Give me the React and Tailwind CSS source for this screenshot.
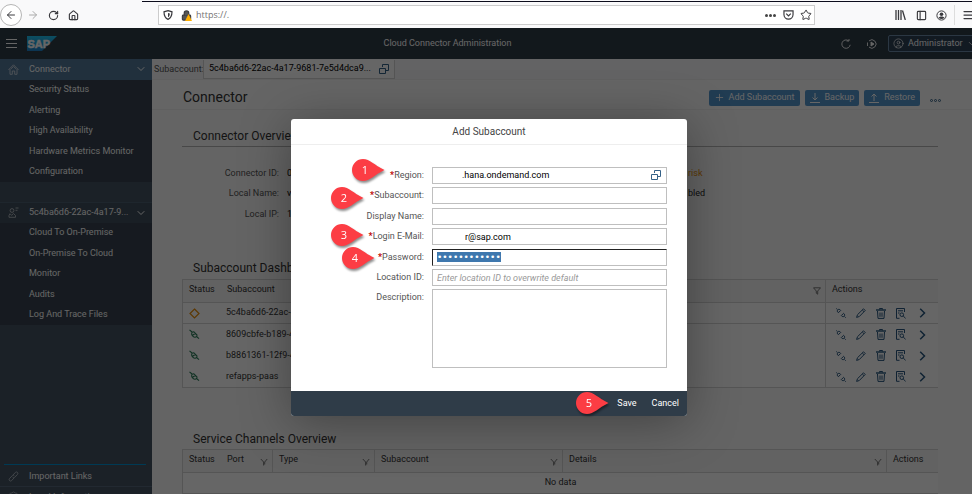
import { useEffect, useRef } from "react";
import {
  ArrowLeft, ArrowRight, RotateCw, House, Shield, Lock, Star, Menu, ChevronDown,
  CircleUser, Plus, PanelLeft,
} from "lucide-react";

function SapLogo() {
  return (
    <svg width="30" height="15" viewBox="0 0 30 15" role="img" aria-label="SAP">
      <defs>
        <linearGradient id="sap" x1="0" y1="0" x2="0" y2="1">
          <stop offset="0" stopColor="#1fc4f5" />
          <stop offset="1" stopColor="#1f82cc" />
        </linearGradient>
      </defs>
      <path d="M0 0H30L15 15H0Z" fill="url(#sap)" />
      <text x="0.500" y="11.500" fontFamily="Liberation Sans, sans-serif" fontWeight="700" fontSize="11" fill="#fff" stroke="#fff" strokeWidth="0.500">SAP</text>
    </svg>
  );
}

function ValueHelpIcon() {
  return (
    <svg width="10" height="10" viewBox="0 0 10 10" fill="none" stroke="#346187">
      <path d="M3.500 3V.5H9.500V6.500H6.500" />
      <path d="M.5 4.500H6.500V9.500H.5Z" />
    </svg>
  );
}

function FilterIcon({ thin }) {
  return (
    <svg width="8" height="8" viewBox="0 0 8 8" fill="none" stroke="#6a6a6a" strokeWidth="0.900">
      <path d={thin ? "M.8 1L3.600 4V7.500M7.200 1L4.700 4V6.500" : "M.5 .8H7.500L4.700 4V7.200L3.300 6.200V4Z"} />
    </svg>
  );
}

function HomeIcon() {
  return (
    <svg width="11" height="11" viewBox="0 0 11 11" fill="none" stroke="#c9d3dc" strokeWidth="0.900">
      <path d="M.5 5.800L5.500 .8L10.500 5.800M2 5V10.300H4.300V7H6.700V10.300H9V5M3 4.800L5.500 2.500L8 4.800" />
    </svg>
  );
}

function PersonIcon() {
  return (
    <svg width="11" height="11" viewBox="0 0 11 11" fill="none" stroke="#b5bcc2" strokeWidth="0.900">
      <circle cx="4" cy="3.500" r="1.900" />
      <path d="M1 10.300H7.500V8.500L5.500 6.500L3.500 8.300L2 6.700L1 8.500ZM7.500 1H10.500M7.500 3.300H9.500" />
    </svg>
  );
}

function ChainIcon() {
  return (
    <svg width="11" height="11" viewBox="0 0 11 11" fill="none" stroke="#a5afb8" strokeWidth="1">
      <path d="M4.800 4.200L7.500 1.300C8.700 .2 10.700 1.900 9.600 3.300L6.800 6.300C6.200 6.900 5.200 6.800 4.600 6.200" />
      <path d="M6.200 6.800L3.500 9.700C2.300 10.800 .3 9.100 1.400 7.700L4.200 4.700C4.800 4.100 5.800 4.200 6.400 4.800" />
    </svg>
  );
}

function ConnectedIcon() {
  return (
    <svg width="11" height="11" viewBox="0 0 11 11" fill="none" stroke="#2b7d5a" strokeWidth="1.100">
      <path d="M.5 .8L3 3M7.500 7.500L10 9.700M4 7.300C1.500 5.300 2.700 2.600 4.800 2.700L8 6C8.200 8 5.800 9 4 7.300ZM3.400 6.300L6.800 4.200" />
    </svg>
  );
}

function DisconnectIcon() {
  return (
    <svg width="10" height="10" viewBox="0 0 10 10" fill="none" stroke="currentColor" strokeWidth="1">
      <path d="M.3 .5L1.500 1.700M8.500 8.500L9.700 9.700M1.500 3.800C.8 2.200 2.300 .8 3.800 1.500L4.700 2.400L2.400 4.700ZM8.500 6.200C9.200 7.800 7.700 9.200 6.200 8.500L5.300 7.600L7.600 5.300Z" />
    </svg>
  );
}

function EditIcon() {
  return (
    <svg width="10" height="10" viewBox="0 0 10 10" fill="none" stroke="currentColor" strokeWidth="1">
      <path d="M.6 9.400L1.500 6.700L7.500 .8L9.200 2.500L3.300 8.500ZM6.300 2L8 3.700" />
    </svg>
  );
}

function DeleteIcon() {
  return (
    <svg width="10" height="11" viewBox="0 0 10 11" fill="none" stroke="currentColor" strokeWidth="1">
      <path d="M0 2H10" strokeWidth="1.400" />
      <path d="M3.500 1.500V.5H6.500V1.500M1.500 3L2 10.400H8L8.500 3M4 4.500V8.800M6 4.500V8.800" />
    </svg>
  );
}

function DetailsIcon() {
  return (
    <svg width="10" height="11" viewBox="0 0 10 11" fill="none" stroke="currentColor" strokeWidth="1">
      <path d="M3.500 10.300H.5V.5H8.500V4M2 2.800H7M2 5H3.500" />
      <circle cx="5.800" cy="6.700" r="1.800" />
      <path d="M7.200 8L9.600 10.300" />
    </svg>
  );
}

function OpenIcon() {
  return (
    <svg width="7" height="10" viewBox="0 0 7 10" fill="none" stroke="currentColor" strokeWidth="1.500">
      <path d="M1.200 .8L5.500 5L1.200 9.200" />
    </svg>
  );
}

const field = "w-full border border-[#bfbfbf] bg-white h-[17px] px-1 text-[9px] text-black outline-none";

function Field({ id, label, required, children }) {
  return (
    <div className="flex items-center gap-2">
      <label htmlFor={id} className="w-[133px] text-right text-[9px] text-[#555]">
        {required && <span className="font-bold text-[#b00]">*</span>}{label}:
      </label>
      <div className="relative flex w-[235px]">{children}</div>
    </div>
  );
}

function Pin({ n, className }) {
  return (
    <svg className={"absolute drop-shadow-[1px_2px_1px_rgba(0,0,0,0.45)] " + className} width="33" height="22" viewBox="0 0 33 22">
      <path d="M11 0C18 0 22 6 32.500 11C22 16 18 22 11 22A11 11 0 0 1 11 0Z" fill="#fc3d44" />
      <text x="13" y="15" textAnchor="middle" fontFamily="Open Sans, sans-serif" fontSize="11" fill="#fff">{n}</text>
    </svg>
  );
}

function BrowserBar() {
  const ic = { size: 12, strokeWidth: 2 };
  return (
    <div className="relative flex h-7 items-center bg-[#f9f9fa] pt-[2px] text-[#3a3a3e]">
      <div className="absolute top-[1px] right-0 left-[142px] h-px bg-[#0c0c1c]" />
      <div className="flex w-[158px] items-center gap-[9px]">
        <button aria-label="Back" className="grid size-[22px] place-items-center rounded-full border border-[#b5b5b5] bg-white"><ArrowLeft {...ic} /></button>
        <button aria-label="Forward" className="-ml-[4px] text-[#aaa]"><ArrowRight {...ic} /></button>
        <button aria-label="Reload"><RotateCw size={11} strokeWidth={2.5} /></button>
        <button aria-label="Home"><House size={11} strokeWidth={2.5} /></button>
      </div>
      <div className="flex h-5 w-[657px] shrink grow items-center border border-[#ccc] bg-white px-1">
        <svg width="10" height="10" viewBox="0 0 10 10" fill="none" stroke="currentColor" strokeWidth="1.200"><path d="M5 .7L9 1.800C9 5.500 8 8 5 9.400C2 8 1 5.500 1 1.800Z" /><path d="M5 3L6.800 3.400C6.800 5.300 6.300 6.500 5 7.300Z" fill="currentColor" stroke="none" /></svg>
        <span className="relative ml-2 flex">
          <Lock size={11} strokeWidth={2.5} fill="#555" />
          <svg className="absolute top-[4px] left-[4px]" width="7" height="7" viewBox="0 0 7 7"><path d="M3.500 0L7 7H0Z" fill="#ffae00" /></svg>
        </span>
        <input aria-label="Address" readOnly value="https://." className="ml-1 min-w-0 flex-1 font-['Open_Sans',sans-serif] text-[9px] text-[#737373] outline-none" />
        <button aria-label="Page actions" className="flex gap-px">
          <i className="size-[3px] rounded-full bg-[#444]" /><i className="size-[3px] rounded-full bg-[#444]" /><i className="size-[3px] rounded-full bg-[#444]" />
        </button>
        <button aria-label="Pocket" className="ml-[7px]">
          <svg width="11" height="10" viewBox="0 0 12 11" fill="none" stroke="currentColor" strokeWidth="1.300"><path d="M1 1H11V5A5 5 0 0 1 1 5ZM3.500 4L6 6.500L8.500 4" /></svg>
        </button>
        <button aria-label="Bookmark" className="mr-[-2px] ml-[6px]"><Star size={12} strokeWidth={2} /></button>
      </div>
      <div className="flex w-[163px] shrink-0 items-center pl-[80px]">
        <button aria-label="Library">
          <svg width="11" height="10" viewBox="0 0 11 10" stroke="currentColor" strokeWidth="1.300"><path d="M1 0V10M3.500 0V10M6 0V10M7.500 .5L10.300 10" /></svg>
        </button>
        <button aria-label="Sidebar" className="ml-[10px]"><PanelLeft size={11} strokeWidth={2.500} /></button>
        <button aria-label="Account" className="ml-[9px]">
          <svg width="11" height="11" viewBox="0 0 11 11"><circle cx="5.500" cy="5.500" r="4.600" fill="none" stroke="currentColor" /><circle cx="5.500" cy="4.200" r="1.800" fill="currentColor" /><path d="M2.500 8C3 6 8 6 8.500 8Q5.500 10 2.500 8Z" fill="currentColor" /></svg>
        </button>
        <span className="ml-[7px] h-5 w-px bg-[#ddd]" />
        <button aria-label="Menu" className="ml-[7px]"><Menu size={12} strokeWidth={2.500} /></button>
      </div>
    </div>
  );
}

function Header() {
  return (
    <header className="flex h-[31px] items-center bg-[#2f3c48] pl-[6px] text-white">
      <button aria-label="Toggle navigation" className="flex w-[11px] flex-col gap-[3px]">
        <i className="h-px bg-white" /><i className="h-px bg-white" /><i className="h-px bg-white" />
      </button>
      <span className="ml-[10px]"><SapLogo /></span>
      <h1 className="flex-1 text-center text-[9px]">Cloud Connector Administration</h1>
      <button aria-label="Refresh" className="ml-[3px]">
        <svg width="10" height="10" viewBox="0 0 10 10" fill="none" stroke="#fff" strokeWidth="0.900"><path d="M7.500 1.700A4.200 4.200 0 1 0 9.200 5.800M5.500 2H8V-.2" /></svg>
      </button>
      <button aria-label="Auto refresh" className="ml-4">
        <svg width="10" height="10" viewBox="0 0 10 10" fill="none" stroke="#fff" strokeWidth="0.900"><path d="M2 1.900A4.200 4.200 0 1 1 2 8.100M.5 3.500V7" /><path d="M4 3L7 5L4 7Z" fill="#fff" /></svg>
      </button>
      <button className="ml-[11px] flex h-[17px] w-[90px] items-center gap-1 rounded-[2px] border border-[#6c8aa8] bg-[#2d4156] pl-1 text-[9px]">
        <CircleUser size={11} strokeWidth={1.500} />Administrator<ChevronDown size={9} />
      </button>
    </header>
  );
}

function NavGroup({ icon, title, items, active }) {
  return (
    <div className="grid h-[123px] shrink-0 auto-rows-fr bg-[#374350]">
      <a href="#" className={"flex items-center pr-[5px] pl-[8px] " + (active ? "bg-[#54799a]" : "border-t border-[#4d5f70] bg-[#3f4e5c]")}>
        <span className="w-[21px]">{icon}</span>
        <span className="flex-1 truncate">{title}</span>
        <ChevronDown size={12} className="ml-1" />
      </a>
      {items.map((t) => <a key={t} href="#" className="flex items-center pl-[29px]">{t}</a>)}
    </div>
  );
}

function Sidebar() {
  return (
    <nav className="flex w-[152px] shrink-0 flex-col bg-[#445363] text-[9px] text-white">
      <NavGroup active title="Connector" icon={<HomeIcon />}
        items={["Security Status", "Alerting", "High Availability", "Hardware Metrics Monitor", "Configuration"]} />
      <div className="h-5 shrink-0" />
      <NavGroup title="5c4ba6d6-22ac-4a17-9..." icon={<PersonIcon />}
        items={["Cloud To On-Premise", "On-Premise To Cloud", "Monitor", "Audits", "Log And Trace Files"]} />
      <div className="flex-1" />
      <div className="mr-[6px] ml-1 h-px shrink-0 bg-[#0092d1]" />
      <a href="#" className="flex h-[22px] shrink-0 items-center gap-[10px] border-b border-[#55677a] pt-[2px] pl-[8px]">
        <ChainIcon />Important Links
      </a>
      <a href="#" className="flex h-[7px] shrink-0 items-start gap-[10px] overflow-hidden pt-[4px] pl-[8px] leading-[12px]">
        <Shield size={11} strokeWidth={1.500} className="shrink-0 text-[#b5bcc2]" />Legal Information
      </a>
    </nav>
  );
}

const blueBtn = "flex h-4 items-center rounded-[2px] bg-[#5496cd] text-[9px] text-white";
const dashCell = "h-[21px] p-0 text-left font-normal";

function Arrow({ up }) {
  return (
    <svg width="10" height="10" viewBox="0 0 10 10" fill="none" stroke="#fff" strokeWidth="1">
      <path d={up ? "M5 8V1M2.500 3.500L5 1L7.500 3.500M0 9.500H10" : "M5 0V7M2.500 4.500L5 7L7.500 4.500M0 9.500H10"} />
    </svg>
  );
}

function Dashboard() {
  const rows = ["5c4ba6d6-22ac-4a17-9681-7e5d4dca9", "8609cbfe-b189-4", "b8861361-12f9-4", "refapps-paas"];
  return (
    <table className="w-full table-fixed border-separate border-spacing-0 border border-r-0 border-[#d5d5d5] bg-white text-[9px] text-[#333]">
      <colgroup><col className="w-[43px]" /><col /><col className="w-[15px]" /><col className="w-[113px]" /></colgroup>
      <thead>
        <tr className="bg-[#f5f5f5]">
          <th className="h-[23px] border-b border-[#d5d5d5] p-0 pb-[3px] pl-[6px] text-left font-normal">Status</th>
          <th className="border-b border-[#d5d5d5] p-0 pb-[3px] pl-[1px] text-left font-normal">Subaccount</th>
          <th className="border-b border-[#d5d5d5] p-0 pl-[3px]"><FilterIcon /></th>
          <th className="border-b border-l border-[#d5d5d5] p-0 pb-[3px] pl-[6px] text-left font-normal">Actions</th>
        </tr>
      </thead>
      <tbody>
        {rows.map((r, i) => {
          const b = i === 0 ? " border-b border-[#d5d5d5]" : "";
          return (
            <tr key={r}>
              <td className={dashCell + " pl-[6px]" + b}>
                {i === 0
                  ? <svg width="11" height="11" viewBox="0 0 11 11"><path d="M5.500 1L10 5.500L5.500 10L1 5.500Z" fill="none" stroke="#e78c07" strokeWidth="1.200" /></svg>
                  : <ConnectedIcon />}
              </td>
              <td className={dashCell + " truncate" + b}>{r}</td>
              <td className={dashCell + b} />
              <td className={dashCell + " border-l border-l-[#d5d5d5] pl-[10px]" + b}>
                <div className="flex items-center gap-[10px] text-[#28567f]">
                  <button aria-label="Disconnect"><DisconnectIcon /></button>
                  <button aria-label="Edit"><EditIcon /></button>
                  <button aria-label="Delete"><DeleteIcon /></button>
                  <button aria-label="Details"><DetailsIcon /></button>
                  <button aria-label="Open" className="ml-[3px]"><OpenIcon /></button>
                </div>
              </td>
            </tr>
          );
        })}
      </tbody>
    </table>
  );
}

function Channels() {
  const heads = [["Status", false], ["Port", true], ["Type", true], ["Subaccount", true], ["Details", true], ["Actions", false]];
  return (
    <table className="w-full table-fixed border-separate border-spacing-0 border border-r-0 border-[#d5d5d5] bg-white text-[9px] text-[#333]">
      <colgroup><col className="w-[38px]" /><col className="w-[51px]" /><col className="w-[102px]" /><col className="w-[188px]" /><col /><col className="w-[52px]" /></colgroup>
      <thead>
        <tr className="bg-[#f5f5f5]">
          {heads.map(([h, f], i) => (
            <th key={h} className={"h-[23px] border-b border-[#d5d5d5] p-0 pr-1 pb-[3px] pl-[6px] font-normal" + (i > 1 ? " border-l border-l-[#d5d5d5]" : "")}>
              <div className="flex items-center justify-between">{h}{f && <span className="pt-1"><FilterIcon thin /></span>}</div>
            </th>
          ))}
        </tr>
      </thead>
      <tbody><tr><td colSpan={6} className="h-[21px] border-b border-[#d5d5d5] p-0 text-center">No data</td></tr></tbody>
    </table>
  );
}

function Main() {
  const info = [["Connector ID:", "0", "risk"], ["Local Name:", "v", "bled"], ["Local IP:", "1", ""]];
  return (
    <main className="min-w-0 flex-1 overflow-hidden bg-[#fafafa] text-[#333]">
      <div className="flex h-5 items-center bg-[#f7f8fa] pl-[2px] text-[9px]">
        <label htmlFor="current" className="w-[49px] pt-px text-[#555]">Subaccount:</label>
        <div className="flex h-[19px] w-[192px] items-center border border-t-0 border-[#d5d5d5] bg-white px-[5px] pt-px">
          <input id="current" readOnly value="5c4ba6d6-22ac-4a17-9681-7e5d4dca9..." className="min-w-0 flex-1 text-black outline-none" />
          <button aria-label="Choose subaccount"><ValueHelpIcon /></button>
        </div>
      </div>
      <div className="flex h-[31px] items-center gap-[5px] border-t border-b border-[#f0f0f0] bg-[#fcfcfc] pt-[6px] pr-[37px] pl-[31px]">
        <h2 className="flex-1 text-[14px]">Connector</h2>
        <button className={blueBtn + " gap-1 px-[5px]"}><Plus size={11} strokeWidth={1.800} />Add Subaccount</button>
        <button className={blueBtn + " gap-[5px] px-[5px]"}><Arrow />Backup</button>
        <button className={blueBtn + " gap-[5px] px-[5px]"}><Arrow up />Restore</button>
        <button aria-label="More" className="ml-[5px] flex gap-[1px] pt-[6px]">
          <i className="size-[3px] rounded-full border border-[#346187]" /><i className="size-[3px] rounded-full border border-[#346187]" /><i className="size-[3px] rounded-full border border-[#346187]" />
        </button>
      </div>
      <div className="pr-[40px] pl-[30px]">
        <h3 className="mt-[15px] h-[22px] border-b border-[#b5b5b5] pl-[11px] text-[12px] leading-[23px]">Connector Overview</h3>
        <dl className="mt-4 grid h-[62px] auto-rows-fr text-[9px]">
          {info.map(([k, v, s]) => (
            <div key={k} className="flex items-center">
              <dt className="w-[97px] text-right text-[#555]">{k}</dt>
              <dd className="w-[409px] pl-[8px] text-black">{v}</dd>
              <dd className={s === "risk" ? "text-[#e78c07]" : "text-[#222]"}>{s}</dd>
            </div>
          ))}
        </dl>
        <h3 className="mt-[33px] pl-[11px] text-[12px] leading-[21px]">Subaccount Dashboard</h3>
        <Dashboard />
        <h3 className="mt-[41px] pl-[11px] text-[12px] leading-[20px]">Service Channels Overview</h3>
        <Channels />
      </div>
    </main>
  );
}

function Dialog() {
  const pw = useRef(null);
  useEffect(() => { pw.current.focus(); pw.current.select(); }, []);
  return (
    <section role="dialog" aria-label="Add Subaccount" className="relative w-[396px] rounded-[3px] bg-white shadow-[0_6px_50px_rgba(0,0,0,0.35)]">
      <h2 className="h-[26px] border-b border-[#eee] text-center text-[10px] leading-[26px] text-[#444]">Add Subaccount</h2>
      <form className="pt-5" onSubmit={(e) => e.preventDefault()}>
        <div className="grid h-[123px] auto-rows-fr">
          <Field id="region" label="Region" required>
            <input id="region" defaultValue=".hana.ondemand.com" className={field + " pl-[29px]"} />
            <button type="button" aria-label="Choose region" className="absolute top-[3px] right-[6px]"><ValueHelpIcon /></button>
          </Field>
          <Field id="sub" label="Subaccount" required><input id="sub" className={field} /></Field>
          <Field id="name" label="Display Name"><input id="name" className={field} /></Field>
          <Field id="mail" label="Login E-Mail" required><input id="mail" defaultValue="r@sap.com" className={field + " pl-[32px]"} /></Field>
          <Field id="pass" label="Password" required>
            <input id="pass" ref={pw} type="password" defaultValue="abcdefghijkl" className={field + " border-t-[#222] border-l-[#222] font-['DejaVu_Sans',sans-serif] selection:bg-[#3f78ae] selection:text-white"} />
          </Field>
          <Field id="loc" label="Location ID"><input id="loc" placeholder="Enter location ID to overwrite default" className={field + " placeholder:text-[#999] placeholder:italic"} /></Field>
        </div>
        <div className="flex gap-2 pt-px pb-[23px]">
          <label htmlFor="desc" className="w-[133px] pt-[2px] text-right text-[9px] text-[#555]">Description:</label>
          <textarea id="desc" className="block h-[79px] w-[235px] resize-none border border-[#bfbfbf] outline-none" />
        </div>
        <div className="flex h-[25px] items-center justify-end gap-[15px] rounded-b-[3px] bg-[#2f3c48] pt-px pr-[8px] text-[9px] text-white">
          <button>Save</button>
          <button type="button">Cancel</button>
        </div>
      </form>
      <Pin n="1" className="top-[40px] left-[61px]" />
      <Pin n="2" className="top-[68px] left-[40px]" />
      <Pin n="3" className="top-[105px] left-[40px]" />
      <Pin n="4" className="top-[128px] left-[51px]" />
      <Pin n="5" className="top-[273px] left-[285px]" />
    </section>
  );
}

export default function App() {
  return (
    <div className="h-screen overflow-hidden font-[Roboto,'Liberation_Sans',sans-serif] leading-normal">
      <div className="flex h-full w-[calc(100%+6px)] flex-col">
        <BrowserBar />
        <div className="relative flex min-h-0 flex-1 flex-col">
          <Header />
          <div className="flex min-h-0 flex-1"><Sidebar /><Main /></div>
          <div className="absolute inset-0 flex items-center justify-center bg-black/60 pt-[13px]"><Dialog /></div>
        </div>
      </div>
    </div>
  );
}
